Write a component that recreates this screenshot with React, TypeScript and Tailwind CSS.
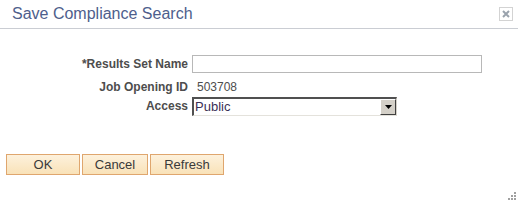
const LABEL = 'text-[12px] font-bold text-[#4d4d4d] text-right';

function CloseBox() {
  return (
    <span className="w-[14px] h-[14px] border border-[#d3d3d3] bg-white flex items-center justify-center">
      <svg width="8" height="8" viewBox="0 0 8 8">
        <path d="M1 1L7 7M7 1L1 7" stroke="#9aa3ad" strokeWidth="2" />
      </svg>
    </span>
  );
}

function Grip() {
  const dots = [
    [6, 0],
    [3, 3],
    [6, 3],
    [0, 6],
    [3, 6],
    [6, 6],
  ];
  return (
    <svg width="8" height="8" viewBox="0 0 8 8">
      {dots.map(([x, y], i) => (
        <rect key={i} x={x} y={y} width="2" height="2" fill="#a0a0a0" />
      ))}
    </svg>
  );
}

function Button({ label, width }: { label: string; width: string }) {
  return (
    <button
      type="button"
      className={`${width} h-[21px] border border-[#dfa66e] bg-gradient-to-b from-[#fdf1dc] to-[#f9e2b8] text-[13px] font-normal text-[#3a3a3a] leading-none`}
    >
      {label}
    </button>
  );
}

export default function App() {
  return (
    <div className="w-[518px] h-[203px] bg-white relative font-['Liberation_Sans',Arial,sans-serif] overflow-hidden">
      <div className="h-[29px] border-b border-[#cacdd3] flex items-start justify-between pl-3 pr-[5px]">
        <span className="text-[16px] text-[#4e5e8c] leading-none mt-[6px]">Save Compliance Search</span>
        <span className="mt-[7px]">
          <CloseBox />
        </span>
      </div>

      <div className="grid grid-cols-[188px_auto] gap-x-1 mt-[26px]">
        <div className={`${LABEL} h-[23px] leading-[19px]`}>*Results Set Name</div>
        <div className="h-[23px]">
          <div className="w-[290px] h-[18px] border border-[#b8b8b8] bg-white" />
        </div>

        <div className={`${LABEL} h-[19px] leading-[19px]`}>Job Opening ID</div>
        <div className="h-[19px] leading-[19px] text-[12px] text-[#4d4d4d] pl-[5px]">503708</div>

        <div className={`${LABEL} h-[19px] leading-[19px]`}>Access</div>
        <div className="h-[19px]">
          <div className="w-[205px] h-[19px] flex border-t-2 border-l-2 border-t-[#505050] border-l-[#505050] border-b border-r border-b-[#e4e2dc] border-r-[#d4d0c8] bg-white">
            <span className="flex-1 text-[13px] text-[#3b2f55] leading-[16px] pl-[1px]">Public</span>
            <span className="w-[16px] h-full bg-[#d4d0c8] border-l border-t border-l-white border-t-white border-r border-b border-r-[#404040] border-b-[#404040] flex items-center justify-center">
              <svg width="7" height="4" viewBox="0 0 7 4">
                <path d="M0 0H7L3.5 4Z" fill="#000" />
              </svg>
            </span>
          </div>
        </div>
      </div>

      <div className="flex gap-[2px] pl-[6px] mt-[38px]">
        <Button label="OK" width="w-[74px]" />
        <Button label="Cancel" width="w-[66px]" />
        <Button label="Refresh" width="w-[74px]" />
      </div>

      <div className="absolute right-[2px] bottom-[3px]">
        <Grip />
      </div>
    </div>
  );
}
